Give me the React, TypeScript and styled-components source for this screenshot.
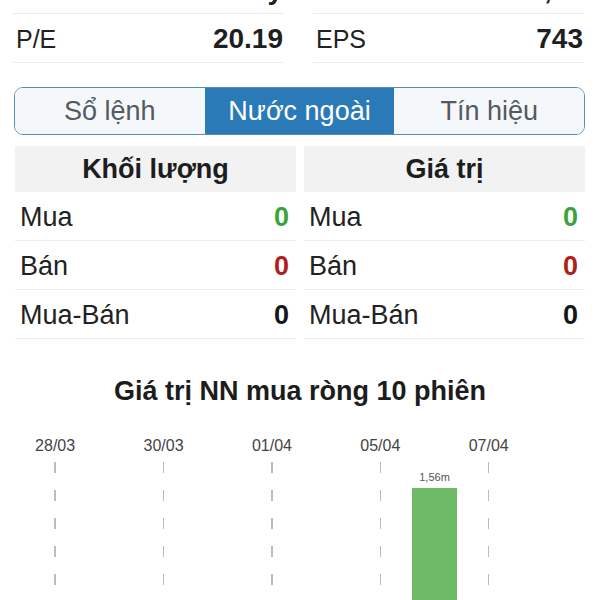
import styled, { createGlobalStyle } from 'styled-components'

const GlobalStyle = createGlobalStyle`
  html, body {
    margin: 0;
    padding: 0;
    background: #fff;
    overflow: hidden;
  }
  body {
    font-family: "Liberation Sans", Arial, sans-serif;
    color: #1c1c1c;
  }
`

const Page = styled.div`
  width: 600px;
  display: flex;
  flex-direction: column;
`

const StatsGrid = styled.div`
  margin: -35px 16px 0 13px;
  display: grid;
  grid-template-columns: 1fr 1fr;
  column-gap: 29px;
`

const StatRow = styled.div`
  height: 49px;
  display: flex;
  align-items: center;
  justify-content: space-between;
  border-bottom: 1px solid #ececec;
  box-sizing: border-box;
  padding: 2px 1px 0 3px;
`

const StatLabel = styled.span`
  font-size: 25px;
  color: #222;
`

const StatValue = styled.span`
  font-size: 28px;
  font-weight: 700;
  color: #1f1f1f;
`

const Tabs = styled.div`
  margin: 24px 15px 0 14px;
  height: 48px;
  display: flex;
  border: 1.5px solid #5b8db4;
  border-radius: 9px;
  overflow: hidden;
  box-sizing: border-box;
`

const Tab = styled.div<{ $active?: boolean }>`
  flex: 1;
  display: flex;
  align-items: center;
  justify-content: center;
  font-size: 27px;
  color: ${p => (p.$active ? '#ffffff' : '#555a5e')};
  background: ${p => (p.$active ? '#2b7ab8' : '#f4f8fb')};
`

const FlowGrid = styled.div`
  margin: 11px 15px 0 15px;
  display: grid;
  grid-template-columns: 1fr 1fr;
  column-gap: 8px;
`

const FlowTable = styled.div`
  display: flex;
  flex-direction: column;
`

const FlowHeader = styled.div`
  height: 46px;
  background: #f2f2f2;
  display: flex;
  align-items: center;
  justify-content: center;
  font-size: 27px;
  font-weight: 700;
  color: #1d1d1d;
`

const FlowRow = styled.div`
  height: 49px;
  display: flex;
  align-items: center;
  justify-content: space-between;
  border-bottom: 1px solid #ececec;
  box-sizing: border-box;
  padding: 2px 7px 0 5px;
  font-size: 27px;
  color: #222;
`

const FlowValue = styled.span<{ $tone: 'up' | 'down' | 'flat' }>`
  font-weight: 700;
  color: ${p => (p.$tone === 'up' ? '#3ca33a' : p.$tone === 'down' ? '#b21d1d' : '#161616')};
`

const ChartTitle = styled.div`
  margin-top: 37px;
  line-height: 30px;
  text-align: center;
  font-size: 27px;
  font-weight: 700;
  color: #1c1c1c;
`

const Chart = styled.div`
  margin: 32px 30px 0 28px;
  display: flex;
`

const Column = styled.div`
  flex: 1;
  display: flex;
  flex-direction: column;
  align-items: center;
`

const DateLabel = styled.div`
  height: 24px;
  line-height: 16px;
  font-size: 16px;
  color: #444;
  white-space: nowrap;
`

const Plot = styled.div`
  width: 100%;
  height: 220px;
  display: flex;
  flex-direction: column;
  align-items: center;
  justify-content: flex-end;
`

const Dashes = styled.div`
  width: 1.5px;
  height: 100%;
  background: repeating-linear-gradient(to bottom, #bcbcbc 0 11px, transparent 11px 28px);
`

const BarValue = styled.div`
  font-size: 11px;
  color: #555;
  line-height: 14px;
  margin-bottom: 4px;
`

const Bar = styled.div`
  width: 45px;
  background: #6dbb67;
`

const sessions = [
  { date: '28/03', value: 0 },
  { date: '29/03', value: 0 },
  { date: '30/03', value: 0 },
  { date: '31/03', value: 0 },
  { date: '01/04', value: 0 },
  { date: '04/04', value: 0 },
  { date: '05/04', value: 0 },
  { date: '06/04', value: 1.56 },
  { date: '07/04', value: 0 },
  { date: '08/04', value: 0 },
]

const flows = [
  { title: 'Khối lượng' },
  { title: 'Giá trị' },
]

const App = () => {
  const maxValue = 1.56
  const barMax = 194

  return (
    <Page>
      <GlobalStyle />
      <StatsGrid>
        <StatRow>
          <StatLabel>Vốn hóa</StatLabel>
          <StatValue>3.550 tỷ</StatValue>
        </StatRow>
        <StatRow>
          <StatLabel>Beta</StatLabel>
          <StatValue>1,02</StatValue>
        </StatRow>
        <StatRow>
          <StatLabel>P/E</StatLabel>
          <StatValue>20.19</StatValue>
        </StatRow>
        <StatRow>
          <StatLabel>EPS</StatLabel>
          <StatValue>743</StatValue>
        </StatRow>
      </StatsGrid>

      <Tabs>
        <Tab>Sổ lệnh</Tab>
        <Tab $active>Nước ngoài</Tab>
        <Tab>Tín hiệu</Tab>
      </Tabs>

      <FlowGrid>
        {flows.map(f => (
          <FlowTable key={f.title}>
            <FlowHeader>{f.title}</FlowHeader>
            <FlowRow>
              <span>Mua</span>
              <FlowValue $tone="up">0</FlowValue>
            </FlowRow>
            <FlowRow>
              <span>Bán</span>
              <FlowValue $tone="down">0</FlowValue>
            </FlowRow>
            <FlowRow>
              <span>Mua-Bán</span>
              <FlowValue $tone="flat">0</FlowValue>
            </FlowRow>
          </FlowTable>
        ))}
      </FlowGrid>

      <ChartTitle>Giá trị NN mua ròng 10 phiên</ChartTitle>
      <Chart>
        {sessions.map((s, i) => (
          <Column key={s.date}>
            <DateLabel>{i % 2 === 0 ? s.date : '\u00a0'}</DateLabel>
            <Plot>
              {i % 2 === 0 && <Dashes />}
              {s.value > 0 && (
                <>
                  <BarValue>{s.value.toFixed(2).replace('.', ',')}m</BarValue>
                  <Bar style={{ height: (s.value / maxValue) * barMax }} />
                </>
              )}
            </Plot>
          </Column>
        ))}
      </Chart>
    </Page>
  )
}

export default App
